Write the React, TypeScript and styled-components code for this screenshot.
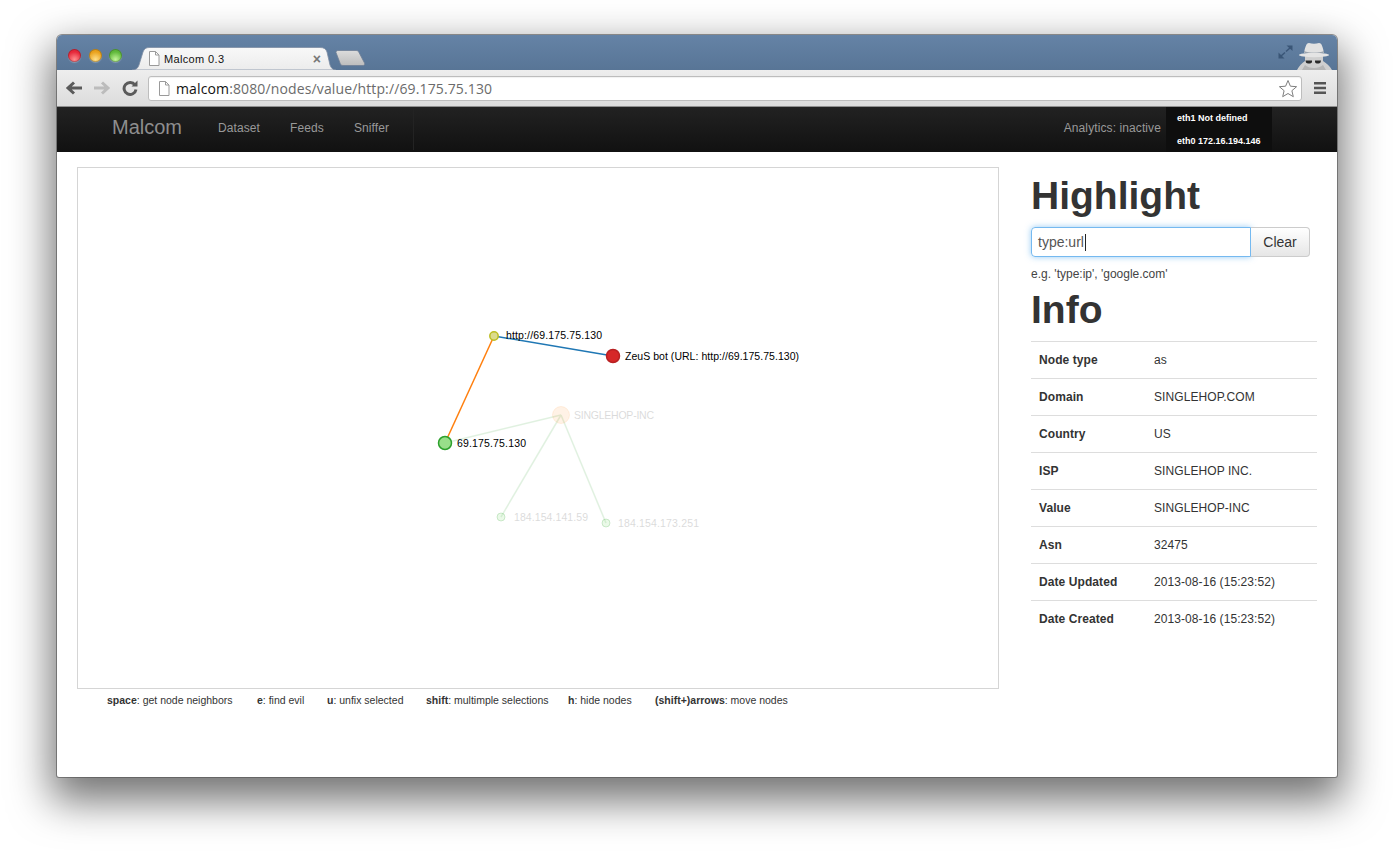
import { FC } from "react";

import styled, { createGlobalStyle } from "styled-components";

const infoRows = [
  ["Node type", "as"],
  ["Domain", "SINGLEHOP.COM"],
  ["Country", "US"],
  ["ISP", "SINGLEHOP INC."],
  ["Value", "SINGLEHOP-INC"],
  ["Asn", "32475"],
  ["Date Updated", "2013-08-16 (15:23:52)"],
  ["Date Created", "2013-08-16 (15:23:52)"],
];

const hints: [string, string, number][] = [
  ["space", "get node neighbors", 127],
  ["e", "find evil", 47],
  ["u", "unfix selected", 76],
  ["shift", "multimple selections", 119],
  ["h", "hide nodes", 64],
  ["(shift+)arrows", "move nodes", 132],
];

const PageIcon: FC = () => (
  <svg width="12" height="15" viewBox="0 0 12 15">
    <path d="M1.5 .5H7.5L11 4V14.5H1.5Z" fill="#fff" stroke="#9a9a9a" />
    <path d="M7.5 .5V4H11" fill="none" stroke="#9a9a9a" />
  </svg>
);

const Graph: FC = () => (
  <GraphSvg viewBox="78 168 920 520">
    <g opacity="0.15" stroke="#3aa63a" strokeWidth="1.5" fill="none">
      <line x1="445" y1="443" x2="561" y2="415" />
      <line x1="501" y1="517" x2="561" y2="415" />
      <line x1="606" y1="523" x2="561" y2="415" />
    </g>
    <line x1="494" y1="336" x2="613" y2="356" stroke="#1f77b4" strokeWidth="1.5" />
    <line x1="494" y1="336" x2="445" y2="443" stroke="#ff7f0e" strokeWidth="1.5" />
    <circle cx="561" cy="415" r="8.5" fill="#ff7f0e" fillOpacity="0.1" stroke="#ff7f0e" strokeOpacity="0.1" />
    <circle cx="501" cy="517" r="4" fill="#98df8a" fillOpacity="0.2" stroke="#2ca02c" strokeOpacity="0.2" />
    <circle cx="606" cy="523" r="4" fill="#98df8a" fillOpacity="0.2" stroke="#2ca02c" strokeOpacity="0.2" />
    <circle cx="445" cy="443" r="6.5" fill="#98df8a" stroke="#2ca02c" strokeWidth="1.5" />
    <circle cx="494" cy="336" r="4.2" fill="#dbdb8d" stroke="#bcbd22" strokeWidth="1.5" />
    <circle cx="613" cy="356" r="6.5" fill="#d62728" stroke="#b82022" strokeWidth="1.5" />
    <NodeLabel x="506" y="339" textLength="96">http://69.175.75.130</NodeLabel>
    <NodeLabel x="625" y="360" textLength="174">ZeuS bot (URL: http://69.175.75.130)</NodeLabel>
    <NodeLabel x="457" y="447" textLength="69">69.175.75.130</NodeLabel>
    <NodeLabel x="574" y="419" textLength="80" $faded>SINGLEHOP-INC</NodeLabel>
    <NodeLabel x="514" y="521" textLength="74" $faded>184.154.141.59</NodeLabel>
    <NodeLabel x="618" y="527" textLength="81" $faded>184.154.173.251</NodeLabel>
  </GraphSvg>
);

const App: FC = () => {
  return (
    <>
      <GlobalStyle />
      <Window>
        <TitleBar>
          <Lights>
            <Light $color="#e5283a" $glow="#ff8f8f" />
            <Light $color="#e9a11c" $glow="#ffe08a" />
            <Light $color="#5fb83a" $glow="#c4f59a" />
          </Lights>
          <Tab>
            <TabShape viewBox="0 0 204 23" preserveAspectRatio="none">
              <defs>
                <linearGradient id="tabFill" x1="0" y1="0" x2="0" y2="1">
                  <stop offset="0" stopColor="#f8f8f8" />
                  <stop offset="1" stopColor="#ececec" />
                </linearGradient>
              </defs>
              <path
                d="M0 23C4 23 6 21 7 18L11 5C12 2 14 .5 17 .5H188C192 .5 194 2 195 5L198 18C199 21 201 23 204 23Z"
                fill="url(#tabFill)"
                stroke="#7f8ea3"
                strokeWidth=".8"
              />
            </TabShape>
            <TabIcon>
              <PageIcon />
            </TabIcon>
            <TabTitle>Malcom 0.3</TabTitle>
            <TabClose>×</TabClose>
          </Tab>
          <NewTab viewBox="0 0 32 16">
            <defs>
              <linearGradient id="newTabFill" x1="0" y1="0" x2="0" y2="1">
                <stop offset="0" stopColor="#dcdcdc" />
                <stop offset="1" stopColor="#bdbdbd" />
              </linearGradient>
            </defs>
            <path
              d="M2 2.5C2 1.2 2.8 .5 4 .5H22C23.5 .5 24.2 1 25 2.5L30.5 13C31.2 14.5 30.5 15.5 29 15.5H9C7.5 15.5 6.8 15 6.2 13.5Z"
              fill="url(#newTabFill)"
              stroke="#6f7f95"
              strokeWidth=".8"
            />
          </NewTab>
          <TitleRight>
            <ExpandIcon viewBox="0 0 15 14">
              <path d="M8.5 .5H14.5V6Z" fill="#3a5677" />
              <path d="M12.5 2.5L8 6.5" stroke="#3a5677" strokeWidth="1.5" />
              <path d="M.5 7.5V13.5H6.5Z" fill="#3a5677" />
              <path d="M2.5 11.5L7 7.5" stroke="#3a5677" strokeWidth="1.5" />
            </ExpandIcon>
            <svg width="40" height="29" viewBox="0 0 40 29">
              <path d="M1 29C3 25 6 22 9 20V15H27V20C30 22 34 25 36 29Z" fill="#cfcfcf" />
              <path d="M9 24C13 28 23 28 27 24L30 29H6Z" fill="#b5b5b5" />
              <path d="M8 12C9 7 10 2 13 2C16 3 20 3 23 2C26 2 27 7 28 12Z" fill="#e2e2e2" />
              <path d="M8 10C13 12 23 12 28 10V11.5C23 13.5 13 13.5 8 11.5Z" fill="#9aa3ad" />
              <ellipse cx="18" cy="14" rx="15" ry="2.2" fill="#e4e4e4" />
              <path d="M9.5 19.5H16V21C15.5 23 11 23 10 21.5ZM19 19.5H25L24.5 21.5C23.5 23 19.5 23 19 21Z" fill="#2a2a2a" />
            </svg>
          </TitleRight>
        </TitleBar>

        <Toolbar>
          <ToolButton>
            <svg width="18" height="14" viewBox="0 0 18 14">
              <path d="M17 7H4M9 1.5L3 7L9 12.5" fill="none" stroke="#5a5a5a" strokeWidth="3" />
            </svg>
          </ToolButton>
          <ToolButton>
            <svg width="18" height="14" viewBox="0 0 18 14">
              <path d="M1 7H14M9 1.5L15 7L9 12.5" fill="none" stroke="#bcbcbc" strokeWidth="3" />
            </svg>
          </ToolButton>
          <ToolButton>
            <svg width="16" height="16" viewBox="0 0 16 16">
              <path d="M13 5A6 6 0 1 0 14 9.5" fill="none" stroke="#5a5a5a" strokeWidth="3" />
              <path d="M9.5 6.5H15.5V.5Z" fill="#5a5a5a" />
            </svg>
          </ToolButton>
          <UrlBox>
            <PageIcon />
            <UrlText>
              <b>malcom</b>:8080/nodes/value/http://69.175.75.130
            </UrlText>
            <svg width="20" height="19" viewBox="0 0 20 19">
              <path
                d="M10 1.5L12.4 7.2L18.6 7.7L13.9 11.7L15.3 17.7L10 14.5L4.7 17.7L6.1 11.7L1.4 7.7L7.6 7.2Z"
                fill="#fff"
                stroke="#7e7e7e"
              />
            </svg>
          </UrlBox>
          <MenuButton>
            <svg width="14" height="12" viewBox="0 0 14 12">
              <path d="M1 0H13V2.5H1ZM1 4.7H13V7.2H1ZM1 9.4H13V11.9H1Z" fill="#555" />
            </svg>
          </MenuButton>
        </Toolbar>

        <NavBar>
          <Brand>Malcom</Brand>
          <NavLinks>
            <NavLink>Dataset</NavLink>
            <NavLink>Feeds</NavLink>
            <NavLink>Sniffer</NavLink>
          </NavLinks>
          <NavStatus>Analytics: inactive</NavStatus>
          <Interfaces>
            <div>eth1 Not defined</div>
            <div>eth0 172.16.194.146</div>
          </Interfaces>
        </NavBar>

        <Content>
          <GraphColumn>
            <GraphBox>
              <Graph />
            </GraphBox>
            <Hints>
              {hints.map(([key, text, width]) => (
                <Hint key={key} $width={width}>
                  <b>{key}</b>: {text}
                </Hint>
              ))}
            </Hints>
          </GraphColumn>

          <SideColumn>
            <Heading>Highlight</Heading>
            <SearchRow>
              <SearchInput>
                type:url
                <Caret />
              </SearchInput>
              <ClearButton>Clear</ClearButton>
            </SearchRow>
            <HelpText>e.g. 'type:ip', 'google.com'</HelpText>
            <Heading>Info</Heading>
            <InfoTable>
              <tbody>
                {infoRows.map(([label, value]) => (
                  <tr key={label}>
                    <th>{label}</th>
                    <td>{value}</td>
                  </tr>
                ))}
              </tbody>
            </InfoTable>
          </SideColumn>
        </Content>
      </Window>
    </>
  );
};

export default App;

const GlobalStyle = createGlobalStyle`
  html, body {
    margin: 0;
    height: 100%;
    background: #ffffff;
    overflow: hidden;
  }

  body {
    padding: 35px 57px 0;
    box-sizing: border-box;
    font-family: "Liberation Sans", Arial, sans-serif;
  }
`;

const Window = styled.div`
  width: 1280px;
  height: 742px;
  display: flex;
  flex-direction: column;
  background: #ffffff;
  border-radius: 5px 5px 2px 2px;
  box-shadow: 0 0 0 1px rgba(80, 80, 80, 0.6), 0 18px 42px 6px rgba(0, 0, 0, 0.55);
  overflow: hidden;
`;

const TitleBar = styled.div`
  height: 35px;
  flex: none;
  display: flex;
  align-items: flex-end;
  background: linear-gradient(#6583a6, #587596);
`;

const Lights = styled.div`
  width: 75px;
  box-sizing: border-box;
  display: flex;
  gap: 7.5px;
  padding: 0 0 8px 11px;
`;

const Light = styled.span<{ $color: string; $glow: string }>`
  width: 13px;
  height: 13px;
  border-radius: 50%;
  background: radial-gradient(circle at 50% 80%, ${(p) => p.$glow}, ${(p) => p.$color} 62%);
  box-shadow: inset 0 0 0 1px rgba(0, 0, 0, 0.22), 0 1px 1px rgba(255, 255, 255, 0.25);
`;

const Tab = styled.div`
  position: relative;
  width: 204px;
  height: 23px;
  display: flex;
  align-items: center;
  padding-left: 16px;
  box-sizing: border-box;
  margin-right: -2px;
`;

const TabShape = styled.svg`
  position: absolute;
  inset: 0;
  width: 100%;
  height: 100%;
`;

const TabIcon = styled.span`
  position: relative;
  display: flex;
  margin-right: 4px;
`;

const TabTitle = styled.span`
  position: relative;
  flex: 1;
  font-size: 11px;
  color: #111;
  letter-spacing: 0.35px;
`;

const TabClose = styled.span`
  position: relative;
  font-size: 14px;
  font-weight: 700;
  color: #777;
  margin-right: 15px;
`;

const NewTab = styled.svg`
  width: 32px;
  height: 16px;
  margin-bottom: 4px;
`;

const TitleRight = styled.div`
  margin-left: auto;
  display: flex;
  align-items: flex-end;
  gap: 3px;
  padding-right: 1px;
  height: 100%;
`;

const ExpandIcon = styled.svg`
  width: 15px;
  height: 14px;
  margin-bottom: 11px;
`;

const Toolbar = styled.div`
  height: 37px;
  flex: none;
  display: flex;
  align-items: center;
  padding-left: 3px;
  box-sizing: border-box;
  background: linear-gradient(#eeeeee, #dcdcdc);
  border-bottom: 1px solid #8f8f8f;
`;

const ToolButton = styled.div`
  width: 28px;
  display: flex;
  justify-content: center;
`;

const UrlBox = styled.div`
  width: 1154px;
  height: 25px;
  margin-left: 4px;
  display: flex;
  align-items: center;
  gap: 6px;
  padding: 0 3px 0 9px;
  box-sizing: border-box;
  background: #ffffff;
  border: 1px solid #bdbdbd;
  border-radius: 3px;
  box-shadow: inset 0 1px 1px rgba(0, 0, 0, 0.06);
`;

const UrlText = styled.div`
  flex: 1;
  font-family: "Open Sans", "Liberation Sans", sans-serif;
  font-size: 14px;
  letter-spacing: 0.13px;
  color: #6b6b6b;

  b {
    font-weight: 400;
    color: #111;
  }
`;

const MenuButton = styled.div`
  flex: 1;
  display: flex;
  justify-content: center;
`;

const NavBar = styled.div`
  height: 45px;
  flex: none;
  display: flex;
  align-items: center;
  padding-left: 55px;
  box-sizing: border-box;
  background: linear-gradient(#222222, #111111);
`;

const Brand = styled.div`
  width: 106px;
  padding-bottom: 4px;
  font-size: 20px;
  font-weight: 200;
  color: #8e8e8e;
`;

const NavLinks = styled.div`
  display: flex;
  align-self: stretch;
  align-items: center;
  gap: 30px;
  width: 196px;
  padding-bottom: 3px;
  border-right: 1px solid #232323;
  margin: 2px 0;
  box-sizing: border-box;
`;

const NavLink = styled.div`
  font-size: 12px;
  letter-spacing: 0.1px;
  color: #999999;
`;

const NavStatus = styled.div`
  margin-left: auto;
  margin-right: 5px;
  padding-bottom: 4px;
  font-size: 12px;
  letter-spacing: 0.1px;
  color: #999999;
`;

const Interfaces = styled.div`
  width: 106px;
  height: 100%;
  margin-right: 65px;
  padding-left: 11px;
  box-sizing: border-box;
  background: #0e0e0e;
  color: #ffffff;
  font-size: 9px;
  font-weight: 700;
  display: flex;
  flex-direction: column;
  justify-content: space-around;
`;

const Content = styled.div`
  flex: 1;
  display: flex;
  padding: 15px 20px 0;
  gap: 32px;
`;

const GraphColumn = styled.div`
  width: 922px;
  flex: none;
`;

const GraphBox = styled.div`
  width: 922px;
  height: 522px;
  box-sizing: border-box;
  border: 1px solid #d5d5d5;
`;

const GraphSvg = styled.svg`
  display: block;
  width: 100%;
  height: 100%;
`;

const NodeLabel = styled.text<{ $faded?: boolean }>`
  font-family: "Liberation Sans", Arial, sans-serif;
  font-size: 10.5px;
  fill: #000;
  opacity: ${(p) => (p.$faded ? 0.14 : 1)};
`;

const Hints = styled.div`
  display: flex;
  gap: 23px;
  padding: 5px 0 0 30px;
  font-size: 10.5px;
  line-height: 12px;
  color: #333333;
`;

const Hint = styled.span<{ $width: number }>`
  width: ${(p) => p.$width}px;
  flex: none;
  white-space: nowrap;
`;

const SideColumn = styled.div`
  width: 286px;
  color: #333333;
`;

const Heading = styled.h1`
  margin: 0;
  padding-top: 9px;
  font-size: 39px;
  line-height: 40px;
  font-weight: 700;
  color: #333333;
`;

const SearchRow = styled.div`
  display: flex;
  margin-top: 11px;
`;

const SearchInput = styled.div`
  width: 220px;
  height: 30px;
  padding-left: 6px;
  box-sizing: border-box;
  display: flex;
  align-items: center;
  font-size: 14px;
  color: #555555;
  border: 1px solid rgba(82, 168, 236, 0.8);
  border-radius: 4px 0 0 4px;
  box-shadow: 0 0 6px rgba(82, 168, 236, 0.6);
`;

const Caret = styled.span`
  width: 1px;
  height: 17px;
  margin-left: 1px;
  background: #222222;
`;

const ClearButton = styled.div`
  width: 59px;
  height: 30px;
  box-sizing: border-box;
  display: flex;
  align-items: center;
  justify-content: center;
  font-size: 14px;
  color: #333333;
  background: linear-gradient(#ffffff, #e6e6e6);
  border: 1px solid #cccccc;
  border-left: 0;
  border-radius: 0 4px 4px 0;
`;

const HelpText = styled.div`
  margin: 9px 0 -1px;
  font-size: 12px;
  line-height: 16px;
  color: #444444;
`;

const InfoTable = styled.table`
  width: 286px;
  margin-top: 11px;
  border-collapse: collapse;
  font-size: 12px;
  letter-spacing: 0.08px;

  th,
  td {
    height: 37px;
    padding: 0 8px;
    box-sizing: border-box;
    border-top: 1px solid #dddddd;
    text-align: left;
    color: #333333;
  }

  th {
    width: 115px;
    padding-right: 0;
    font-weight: 700;
  }
`;
